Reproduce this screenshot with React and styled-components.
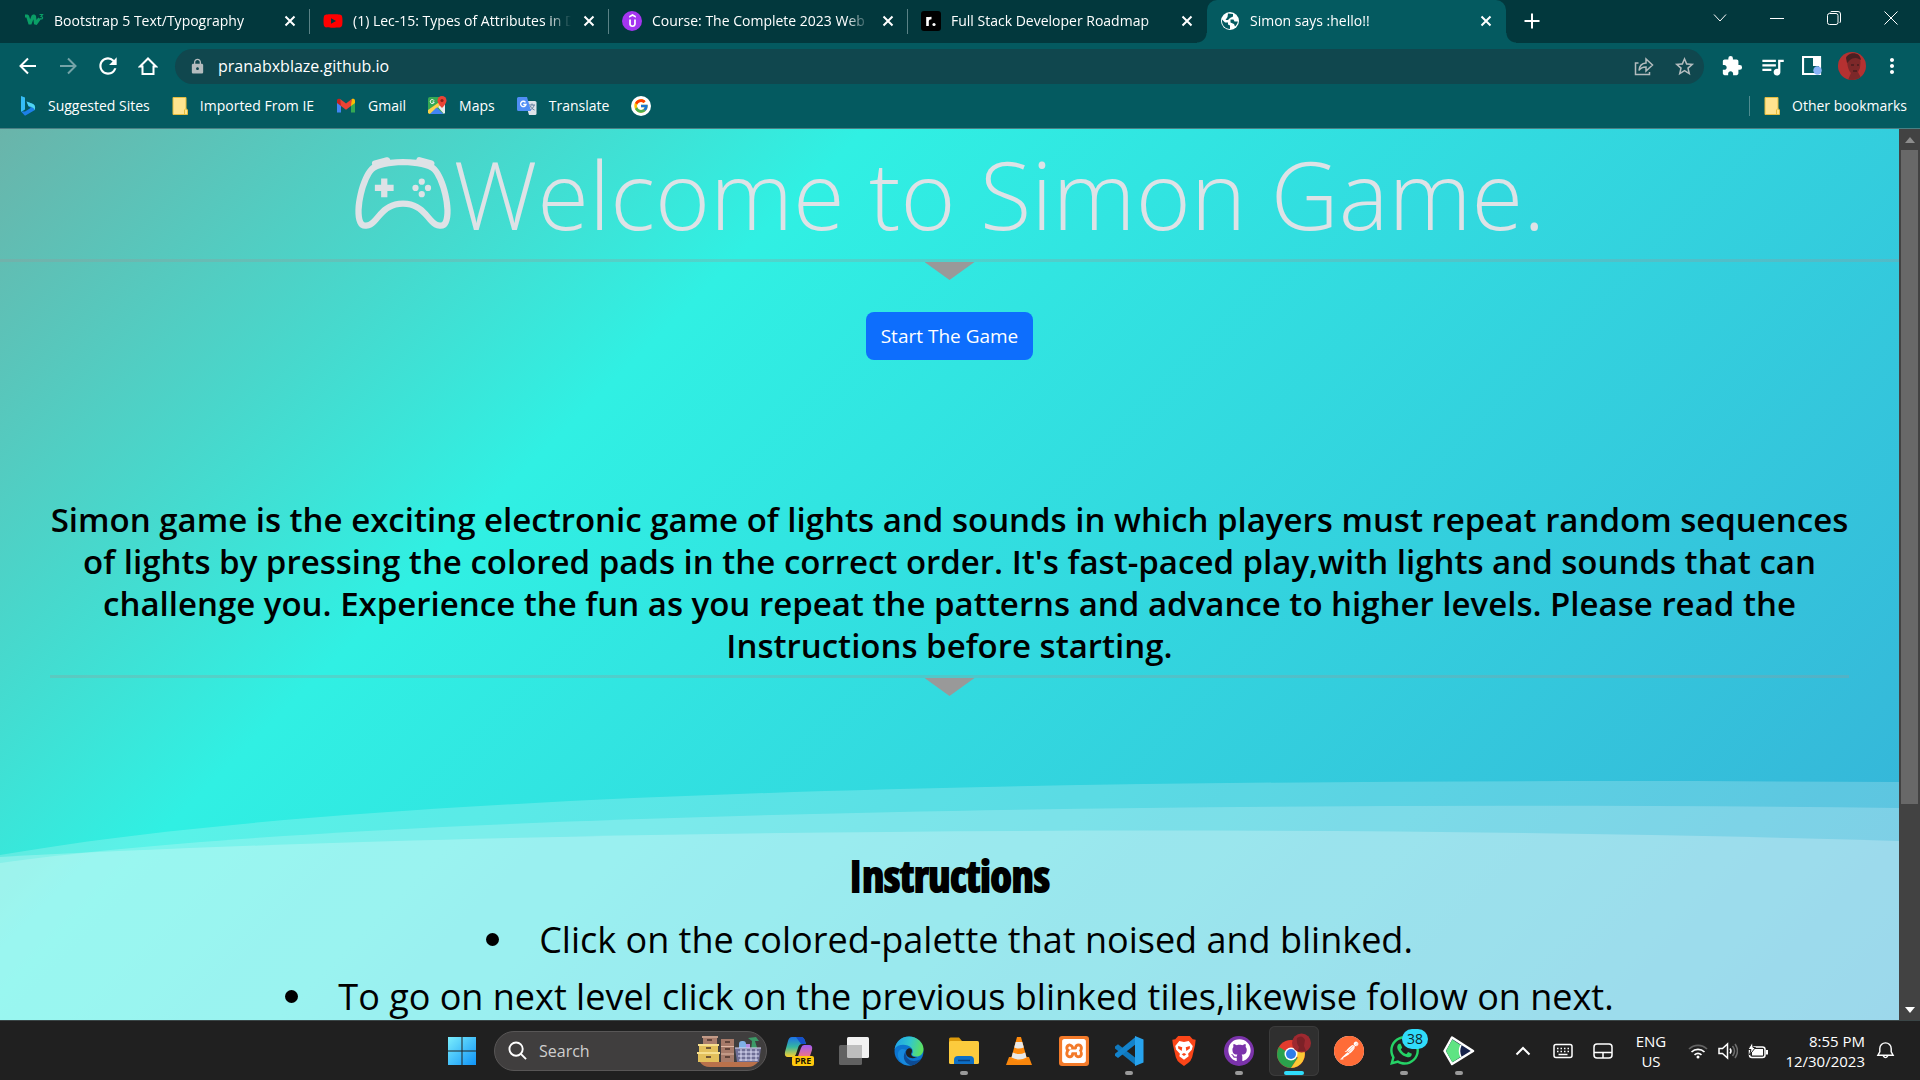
import React from "react";
import styled, { createGlobalStyle, css } from "styled-components";
import { FaYoutube, FaGithub, FaWhatsapp } from "react-icons/fa";
import { FcGoogle } from "react-icons/fc";
import { SiUdemy, SiPostman, SiXampp } from "react-icons/si";
import { MdExtension, MdQueueMusic, MdStarBorder, MdRefresh, MdLock, MdMoreVert } from "react-icons/md";
import { BsController } from "react-icons/bs";

const ui = `"Segoe UI", "Open Sans", "Noto Sans", sans-serif`;

const Global = createGlobalStyle`
  * { box-sizing: border-box; }
  body { margin: 0; font-family: ${ui}; overflow: hidden; }
  button { font: inherit; color: inherit; background: none; border: 0; padding: 0; cursor: pointer; }
  a { color: inherit; text-decoration: none; }
  svg { display: block; flex: none; }
`;

const Desktop = styled.div`
  display: flex;
  flex-direction: column;
  height: 100vh;
  overflow: hidden;
`;

/* ---------- browser frame ---------- */
const TabStrip = styled.header`
  display: flex;
  height: 43px;
  padding-left: 11px;
  flex: none;
  background: #02383d;
  color: #fff;
`;
const Tab = styled.div`
  position: relative;
  display: flex;
  align-items: center;
  width: 299px;
  height: 43px;
  padding: 0 12px 2px 13px;
  gap: 10px;
  border-radius: 10px 10px 0 0;
  background: ${(p) => (p.$active ? "#045a60" : "transparent")};
  ${(p) => p.$divider && css`
    &::after {
      content: "";
      position: absolute;
      right: 0;
      top: 9px;
      width: 1px;
      height: 25px;
      background: #5a8286;
    }
  `}
  ${(p) => p.$active && css`
    &::before, &::after {
      content: "";
      position: absolute;
      bottom: 0;
      width: 10px;
      height: 10px;
    }
    &::before { left: -10px; background: radial-gradient(circle at 0 0, transparent 9px, #045a60 10px); }
    &::after { right: -10px; background: radial-gradient(circle at 100% 0, transparent 9px, #045a60 10px); }
  `}
`;
const TabTitle = styled.span`
  flex: 1;
  min-width: 0;
  overflow: hidden;
  white-space: nowrap;
  font-size: 14px;
  line-height: 20px;
  mask-image: linear-gradient(90deg, #000 calc(100% - 24px), transparent);
`;
const IconButton = styled.button`
  display: flex;
  align-items: center;
  justify-content: center;
  width: ${(p) => p.$w || 40}px;
  height: ${(p) => p.$h || 36}px;
  flex: none;
`;
const Spacer = styled.div`flex: 1;`;

const Toolbar = styled.nav`
  display: flex;
  align-items: center;
  height: 46px;
  padding: 0 8px;
  flex: none;
  background: #045a60;
  color: #fff;
`;
const AddressBar = styled.label`
  display: flex;
  align-items: center;
  flex: 1;
  height: 35px;
  margin: 0 8px 0 7px;
  padding-left: 14px;
  border-radius: 18px;
  background: #10474e;
  color: #b4bcbe;
`;
const Address = styled.input`
  flex: 1;
  min-width: 0;
  margin-left: 12px;
  padding: 0;
  border: 0;
  outline: 0;
  background: none;
  color: #fff;
  font: 16px/24px ${ui};
`;
const Avatar = styled.span`
  width: 28px;
  height: 28px;
  border-radius: 50%;
  overflow: hidden;
`;
const Bookmarks = styled.nav`
  display: flex;
  align-items: center;
  height: 40px;
  padding: 0 13px 6px 20px;
  gap: 22px;
  flex: none;
  background: #045a60;
  border-bottom: 1px solid #4a8084;
  color: #fff;
`;
const Bookmark = styled.a`
  display: flex;
  align-items: center;
  gap: 12px;
  font-size: 14px;
  line-height: 20px;
  white-space: nowrap;
`;
const Divider = styled.span`
  width: 1px;
  height: 20px;
  background: #4f8c90;
  margin-right: -8px;
`;

/* ---------- page ---------- */
const Viewport = styled.div`
  display: flex;
  flex: 1;
  min-height: 0;
`;
const Page = styled.main`
  position: relative;
  flex: 1;
  overflow: hidden;
  background: linear-gradient(135deg, #6ab4aa 0%, #30f0e3 31%, #36b0d8 100%);
  text-align: center;
  color: #000;
`;
const Title = styled.h1`
  display: flex;
  align-items: center;
  justify-content: center;
  margin: 0;
  font-size: 94px;
  line-height: 130px;
  font-weight: 300;
  color: #dee2e6;
  white-space: nowrap;
  svg { width: 100px; height: 100px; }
`;
const Rule = styled.div`
  height: 3px;
  background: rgba(153, 153, 153, 0.3);
`;
const Pointer = styled.div`
  width: 50px;
  height: 18px;
  margin: 0 auto;
  background: #999;
  clip-path: polygon(0 0, 100% 0, 50% 100%);
`;
const StartButton = styled.button`
  height: 48px;
  margin-top: 32px;
  padding: 0 15px;
  border-radius: 8px;
  background: #0d6efd;
  color: #fff;
  font-size: 19px;
`;
const Intro = styled.section`
  margin: 139px 50px 0;
`;
const IntroText = styled.h3`
  margin: 0 -50px;
  padding-bottom: 8px;
  font-size: 33px;
  line-height: 42px;
  font-weight: 600;
  white-space: nowrap;
`;
const Waves = styled.svg`
  position: absolute;
  left: 0;
  bottom: 0;
  width: 100%;
  height: 240px;
`;
const Instructions = styled.section`
  position: relative;
  margin-top: 154px;
`;
const Heading = styled.h2`
  margin: 0;
  font: 900 43px/52px Impact, "Open Sans Condensed", "Roboto Condensed", Roboto, sans-serif;
  -webkit-text-stroke: 2px #000;
`;
const Steps = styled.ul`
  margin: 9px 0 0;
  padding: 0;
  list-style: none;
`;
const Step = styled.li`
  display: flex;
  align-items: center;
  justify-content: center;
  gap: 40px;
  font-size: 36px;
  line-height: 57px;
  font-weight: 400;
  white-space: nowrap;
  &::before {
    content: "";
    width: 13px;
    height: 13px;
    border-radius: 50%;
    background: #000;
  }
`;
const Scrollbar = styled.div`
  display: flex;
  flex-direction: column;
  align-items: center;
  justify-content: space-between;
  width: 21px;
  flex: none;
  background: #424242;
`;
const ScrollArrow = styled.button`
  display: flex;
  align-items: center;
  justify-content: center;
  width: 20px;
  height: 21px;
`;
const Track = styled.div`
  flex: 1;
  display: flex;
  flex-direction: column;
  align-items: center;
  width: 20px;
`;
const Thumb = styled.div`
  width: 17px;
  flex: 0 0 77%;
  background: #686868;
`;

/* ---------- taskbar ---------- */
const Taskbar = styled.footer`
  display: flex;
  align-items: center;
  justify-content: space-between;
  height: 60px;
  padding: 0 15px 0 437px;
  flex: none;
  background: #202020;
  border-top: 1px solid #3a4546;
  color: #fff;
`;
const Apps = styled.div`
  display: flex;
  align-items: center;
  gap: 5px;
`;
const AppButton = styled.button`
  position: relative;
  display: flex;
  align-items: center;
  justify-content: center;
  width: 50px;
  height: 50px;
  border-radius: 6px;
  background: ${(p) => (p.$active ? "#2f2f2f" : "none")};
  box-shadow: ${(p) => (p.$active ? "inset 0 0 0 1px #3b3b3b" : "none")};
  ${(p) => (p.$running || p.$active) && css`
    &::after {
      content: "";
      position: absolute;
      bottom: 1px;
      width: ${p.$active ? 20 : 8}px;
      height: 4px;
      border-radius: 2px;
      background: ${p.$active ? "#30dcfa" : "#9a9a9a"};
    }
  `}
`;
const Search = styled.label`
  display: flex;
  align-items: center;
  width: 273px;
  height: 40px;
  margin: 0 2px;
  padding: 0 5px 0 13px;
  border-radius: 20px;
  border: 1px solid #585656;
  background: #403e3e;
`;
const SearchInput = styled.input`
  flex: 1;
  min-width: 0;
  margin-left: 12px;
  padding: 0;
  border: 0;
  outline: 0;
  background: none;
  font: 16px/24px ${ui};
  &::placeholder { color: #cfcfcf; opacity: 1; }
`;
const Badge = styled.span`
  position: absolute;
  top: 3px;
  right: 1px;
  width: 26px;
  height: 20px;
  border-radius: 10px;
  background: #30dcfa;
  color: #10262b;
  font-size: 14px;
  line-height: 20px;
`;
const Tray = styled.div`
  display: flex;
  align-items: center;
  font-size: 15px;
  line-height: 20px;
`;
const TrayButton = styled.button`
  display: flex;
  align-items: center;
  justify-content: center;
  gap: 10px;
  width: ${(p) => p.$w || 40}px;
  height: 40px;
  text-align: ${(p) => p.$align || "center"};
  ${(p) => p.$align === "right" && "justify-content: flex-end;"}
`;

/* ---------- icons ---------- */
const Line = ({ w = 20, h = w, box = "0 0 20 20", sw = 2, children, ...rest }) => (
  <svg width={w} height={h} viewBox={box} fill="none" stroke="currentColor" strokeWidth={sw} {...rest}>{children}</svg>
);
const CloseIcon = () => <Line w={12} box="0 0 12 12"><path d="M1.500 1.500l9 9m0-9l-9 9" /></Line>;
const W3Mark = () => (
  <svg width="20" height="16" viewBox="0 0 20 16" fill="none" stroke="#0a9e66">
    <path d="M1 3h2.500L6 11l3-8h1.500l1 8 4-5.500" strokeWidth="3" strokeLinejoin="bevel" />
    <path d="M15.500 1.500h3l-1.500 2q2 .2 1.500 1.800-1 1.200-2.800.2" strokeWidth="1.200" />
  </svg>
);
const FolderMark = () => (
  <svg width="16" height="18" viewBox="0 0 16 18">
    <path d="M1 .5h13v11.500l1.500.8v4.700H1z" fill="#ffe48f" stroke="#e5bd3f" />
    <path d="M12.500 17v-4l1.500-1.500" fill="none" stroke="#e5bd3f" />
  </svg>
);
const Bing = () => (
  <svg width="16" height="20" viewBox="0 0 16 20">
    <path d="M1 0l4 1.500v12L1 16z" fill="#35bdf5" />
    <path d="M1 15.500l4 4.200 9.500-5.500c1.500-3 .3-5.500-2-6.500L6.500 5.500l2 5 2.500 1.300L5 15.500z" fill="#1d7fe8" />
    <path d="M6.500 5.500l6 2.200c2.500 1 3.300 4 2 6.500-.3-2-1.500-2.500-3.500-3.400L8.500 10z" fill="#50d6ee" />
  </svg>
);
const Gmail = () => (
  <svg width="20" height="16" viewBox="0 0 20 16">
    <path d="M1 2v12.500h4V7z" fill="#4285f4" /><path d="M19 2v12.500h-4V7z" fill="#34a853" />
    <path d="M15 3.500V8l4-3V2.500C19 .8 17 .2 15.800 1z" fill="#fbbc04" />
    <path d="M1 2.500V5l4 3V3.500L4 1C2.500.2 1 1 1 2.500z" fill="#c5221f" />
    <path d="M4.200 1L10 5.400 15.800 1 15 8l-5 3.800L5 8z" fill="#ea4335" />
  </svg>
);
const Maps = () => (
  <svg width="19" height="19" viewBox="0 0 19 19">
    <rect y="1" width="17" height="17" rx="2" fill="#34a853" />
    <path d="M0 14v3l2 1L17 5V2z" fill="#fbd04a" />
    <path d="M8.500 11.500l7 6.500H2z" fill="#4285f4" /><path d="M10 11l7-6v11.500L16 18z" fill="#e8eaed" />
    <path d="M14 0a4.500 4.500 0 0 1 4.500 4.500C18.500 7.500 14 12 14 12S9.500 7.500 9.500 4.500A4.500 4.500 0 0 1 14 0z" fill="#ea4335" />
    <circle cx="14" cy="4.500" r="1.600" fill="#8e2019" />
    <path d="M6 4.600A2 2 0 1 0 6.200 6H4.500" fill="none" stroke="#fff" />
  </svg>
);
const Translate = () => (
  <svg width="20" height="20" viewBox="0 0 20 20">
    <path d="M8 5h10a1.500 1.500 0 0 1 1.500 1.500v11A1.500 1.500 0 0 1 18 19h-6z" fill="#dfe3ea" />
    <path d="M12 9h6m-3-1.500V9m2 0c0 2-2 4-4 5m.5-4c.5 2 2 3 4 4" stroke="#607d9b" fill="none" />
    <path d="M1.500 1H10l4 14H1.500A1.500 1.500 0 0 1 0 13.500v-11A1.500 1.500 0 0 1 1.500 1z" fill="#4f8df5" />
    <path d="M8.500 6.300A2.700 2.700 0 1 0 9 8.500H6.300" fill="none" stroke="#fff" strokeWidth="1.300" />
  </svg>
);
const GoogleMark = styled.span`
  display: flex;
  padding: 2px;
  border-radius: 50%;
  background: #fff;
`;
const Udemy = styled.span`
  display: flex;
  align-items: center;
  justify-content: center;
  width: 20px;
  height: 20px;
  border-radius: 50%;
  background: #a435f0;
`;
const Roadmap = styled(Udemy)`
  border-radius: 3px;
  background: #000;
`;
const Globe = () => (
  <svg width="20" height="20" viewBox="0 0 20 20">
    <circle cx="10" cy="10" r="9" fill="#fff" />
    <path d="M2 8.500l3 3h3v2l2 1v3.500C5 18 1.500 14 2 8.500zM8 2.500l5 .5v2.500l-3 1.500-2 2H5.500L7.500 6zM10.500 8.500h3l1 2h3.300c-.3 2-1.300 3.700-2.800 5l-1-2.500-3.500-1.500z" fill="#045a60" />
  </svg>
);
const Portrait = () => (
  <svg width="28" height="28" viewBox="0 0 28 28">
    <rect width="28" height="28" fill="#b53131" />
    <path d="M9 7c1-5 11-6 13 0 1 3 0 6 0 9l-2 4 4 8H10l3-7c-3-3-4-9-4-14z" fill="#7d2829" />
    <path d="M8 6c2-6 14-7 15 2l-2-1c-3-2-7-1-9 1l-3 3z" fill="#4c1f21" />
    <path d="M13 13h3m3 0h2m-6 6h4" stroke="#4a1c1e" strokeWidth="1.500" />
  </svg>
);
const WindowsLogo = () => (
  <svg width="30" height="30" viewBox="0 0 30 30">
    <defs><linearGradient id="win" x1="0" y1="0" x2="1" y2="1"><stop stopColor="#7beefc" /><stop offset="1" stopColor="#0f93f7" /></linearGradient></defs>
    <path d="M1 1h13.500v13.500H1zM15.500 1H29v13.500H15.500zM1 15.500h13.500V29H1zM15.500 15.500H29V29H15.500z" fill="url(#win)" />
  </svg>
);
const Boxes = () => (
  <svg width="64" height="32" viewBox="0 0 64 32">
    <path d="M3 27h58q-4 5-10 5H13q-7 0-10-5z" fill="#b9714b" />
    <rect x="6" y="1" width="14" height="8" fill="#a97d6c" /><rect x="5" y="1" width="16" height="2" fill="#c29b88" />
    <rect x="2" y="10" width="19" height="7" fill="#e3c05c" /><rect x="1" y="9" width="21" height="2" fill="#f6df8f" />
    <rect x="1" y="18" width="21" height="9" fill="#e3c05c" /><rect x="0" y="17" width="23" height="2" fill="#f6df8f" />
    <rect x="24" y="4" width="13" height="23" fill="#a67a69" />
    <path d="M24 11.500h13M24 19h13" stroke="#e0b8a4" />
    <path d="M10 5h5M9 13h5M9 22h5M28 7h5M28 14h5M28 22h5" stroke="#4b332b" strokeWidth="1.500" />
    <rect x="42" y="6" width="7" height="10" rx="3" fill="#7fb0e6" /><rect x="49" y="9" width="4" height="6" fill="#b48ae0" />
    <path d="M51 3l8-1 3 4h-4l3 10h-7l1-10z" fill="#3c9a67" />
    <path d="M38 13h26l-2 14H40z" fill="#6f6f96" />
    <path d="M38 13h26M41 17h21M41 21h21M42 25h19M44 14v12M49 14v12M54 14v12M59 14v12" stroke="#dcdcf5" />
  </svg>
);
const Copilot = () => (
  <svg width="30" height="32" viewBox="0 0 30 32">
    <defs>
      <linearGradient id="cpa" x1="0" y1="0" x2="0" y2="1"><stop stopColor="#1d72e8" /><stop offset=".5" stopColor="#35b7a0" /><stop offset="1" stopColor="#ffd02b" /></linearGradient>
      <linearGradient id="cpb" x1="0" y1="0" x2="0" y2="1"><stop stopColor="#a35bf2" /><stop offset="1" stopColor="#ff7a6b" /></linearGradient>
    </defs>
    <path d="M8 2h9q3 0 4 4l1 3h-4q-3 0-4 4l-2 6q-1 3-4 3H4q-4 0-3-5L4 6q1-4 4-4z" fill="url(#cpa)" />
    <path d="M12 2h5q3 0 4 4l1 3h-5z" fill="#1550c9" />
    <path d="M20 10h5q4 0 3 5l-3 9H13l4-11q1-3 3-3z" fill="url(#cpb)" />
    <rect x="8" y="21" width="22" height="10" rx="2" fill="#ffc90e" />
    <text x="19" y="29.300" textAnchor="middle" fontSize="9" fontWeight="700" fill="#1b1500" fontFamily="Open Sans, sans-serif">PRE</text>
  </svg>
);
const TaskView = () => (
  <svg width="30" height="30" viewBox="0 0 30 30">
    <rect x="8" y="1" width="22" height="21" rx="1.500" fill="#f1f1f1" />
    <rect x="0" y="9" width="23" height="20" rx="1.500" fill="#686868" opacity=".9" />
    <path d="M8 9h15v13H9.500A1.500 1.500 0 0 1 8 20.500z" fill="#bdbdbd" />
  </svg>
);
const Edge = () => (
  <svg width="30" height="30" viewBox="0 0 30 30">
    <defs><linearGradient id="eg" x1="0" y1=".3" x2="1" y2=".5"><stop stopColor="#1fa2e8" /><stop offset=".5" stopColor="#31c6cf" /><stop offset="1" stopColor="#5fe25b" /></linearGradient></defs>
    <circle cx="15" cy="15" r="14.500" fill="#0c74cf" />
    <path d="M.6 13C2 5 8 .5 15 .5c8 0 14.500 6 14.500 12.500 0 5-3.500 7.500-7 7.500-3 0-5-1-4.500-2.500 1.500-2 1-4-.5-6C13 7 3 8 .6 13z" fill="url(#eg)" />
    <path d="M12 14c-3 6 1 13 8 14.500-6 2.500-14 0-16-8C3 15 7 11 12 14z" fill="#1789dc" />
    <path d="M12.500 14c-3 6 2 11 7.500 11 3 0 5.500-1 7.500-2.500C25.500 26 22 29 17 29.400 9 27 8 19 12.500 14z" fill="#0d4b94" />
    <path d="M12.500 14c2-3 6-2 5.500 1 0 1-.5 2-1 3 0 2.500 3 3.500 6 3-4 2.500-11 1-11-4 0-1 0-2 .5-3z" fill="#202020" />
  </svg>
);
const Explorer = () => (
  <svg width="30" height="30" viewBox="0 0 30 30">
    <path d="M0 3a1.500 1.500 0 0 1 1.500-1.500H10L13 5v7H0z" fill="#dc9a0b" />
    <rect y="5" width="30" height="23" rx="1.500" fill="#fccb3d" />
    <path d="M5 28v-4q0-4 4-4h12q4 0 4 4v4z" fill="#0d6fc6" /><path d="M9 24.500h12" stroke="#083f7c" strokeWidth="1.500" />
  </svg>
);
const Vlc = () => (
  <svg width="28" height="30" viewBox="0 0 28 30">
    <path d="M4 21h20l3 8H1z" fill="#f8860c" /><path d="M12 1h4l6 22q-8 5-16 0z" fill="#ff8a0d" />
    <path d="M10.700 6h6.600l1.500 5.500q-5 2-9.600 0zM7.800 16.500q6 3 12.400 0l1.300 5q-7 4-15 0z" fill="#e9e9e9" />
  </svg>
);
const IconTile = styled.span`
  display: flex;
  align-items: center;
  justify-content: center;
  width: 30px;
  height: 30px;
  border-radius: ${(p) => p.$round || "3px"};
  background: ${(p) => p.$bg};
  color: #fff;
`;
const Code = () => (
  <svg width="30" height="30" viewBox="0 0 30 30">
    <path d="M1 10.500l3-2.300 18 14V29.500L1 12.500z" fill="#0f78bd" />
    <path d="M22 .5v7.500L4 22l-3-2.300v-2z" fill="#1383cc" /><path d="M21 0l8.500 3.500v23L21 30z" fill="#27a3ee" />
  </svg>
);
const Brave = () => (
  <svg width="28" height="30" viewBox="0 0 24 24" preserveAspectRatio="none">
    <path d="M7 0h10l2.500 2.500L22 3l-.5 4-2.500 10q-1 3-3.500 4.500L12 24l-3.500-2.500Q6 20 5 17L2.500 7 2 3l2.500-.5z" fill="#fb4518" />
    <path d="M8 4l4 .8L16 4l3.500 4-.8 3-3.200 3.200.5 2L12 19l-4-2.800.5-2L5.300 11l-.8-3z" fill="#fff" />
    <path d="M7 8l3.500 1-.5 3-3-2zM17 8l-3.500 1 .5 3 3-2zM10 14.500l2-1 2 1-2 1.500z" fill="#fb4518" />
  </svg>
);
const Chrome = () => (
  <svg width="34" height="36" viewBox="0 0 34 36">
    <circle cx="14" cy="21" r="14" fill="#e33b2e" />
    <path d="M14 21L1.900 14A14 14 0 0 0 14 35l6.500-10z" fill="#2ba24c" />
    <path d="M14 21l7 3.500L14 35a14 14 0 0 0 12.500-20H14z" fill="#fcc934" />
    <circle cx="14" cy="21" r="6.500" fill="#fff" /><circle cx="14" cy="21" r="5" fill="#2f7de9" />
    <circle cx="24.500" cy="10" r="9.500" fill="#9e2930" />
    <path d="M20 5q5-4 8 2l-1 6 2 5h-8l1-4q-3-4-2-9z" fill="#7c2127" />
  </svg>
);
const DevTool = () => (
  <svg width="32" height="30" viewBox="0 0 32 30">
    <path d="M9 1.500L30 15 9 28 1.500 15z" fill="#16234b" stroke="#fff" strokeWidth="2.500" strokeLinejoin="round" />
    <path d="M9.300 3.500l9 6q-4 5 0 11l-9 5.700L3 15z" fill="#5fe483" />
    <path d="M18 9q-3 6 0 12" fill="none" stroke="#fff" strokeWidth="1.500" />
  </svg>
);
const PostmanDisc = styled.span`
  display: flex;
  border-radius: 50%;
  background: #fff;
`;
const Battery = () => (
  <svg width="21" height="18" viewBox="0 0 21 18">
    <rect x="1.500" y="5" width="15.500" height="10.500" rx="2.500" fill="none" stroke="#fff" strokeWidth="1.500" />
    <path d="M4 7h11v6.500H4zM18 8h2v4.500h-2z" fill="#fff" />
    <path d="M4.500 0L0 7.500h3L1.500 13l6-7.500H5z" fill="#fff" stroke="#202020" />
  </svg>
);

const tabs = [
  { title: "Bootstrap 5 Text/Typography", icon: <W3Mark /> },
  { title: "(1) Lec-15: Types of Attributes in D", icon: <FaYoutube size={20} color="#f00" /> },
  { title: "Course: The Complete 2023 Web", icon: <Udemy><SiUdemy size={13} color="#fff" /></Udemy> },
  { title: "Full Stack Developer Roadmap", icon: <Roadmap><svg width="12" height="12" viewBox="0 0 12 12"><path d="M2.500 11V2m0 4q0-3 4-3" stroke="#fff" strokeWidth="2.600" fill="none" /><circle cx="9" cy="9.500" r="1.600" fill="#fff" /></svg></Roadmap> },
  { title: "Simon says :hello!!", icon: <Globe />, active: true },
];

const marks = [
  ["Suggested Sites", <Bing />], ["Imported From IE", <FolderMark />], ["Gmail", <Gmail />],
  ["Maps", <Maps />], ["Translate", <Translate />],
];

const apps = [
  { name: "Copilot", icon: <Copilot /> },
  { name: "Task view", icon: <TaskView /> },
  { name: "Edge", icon: <Edge /> },
  { name: "File Explorer", icon: <Explorer />, running: true },
  { name: "VLC", icon: <Vlc /> },
  { name: "XAMPP", icon: <IconTile $bg="#f37a29"><SiXampp size={24} /></IconTile> },
  { name: "Code", icon: <Code />, running: true },
  { name: "Brave", icon: <Brave /> },
  { name: "GitHub", icon: <IconTile $bg="#7b33ab" $round="50%"><FaGithub size={23} /></IconTile>, running: true },
  { name: "Chrome", icon: <Chrome />, active: true },
  { name: "Postman", icon: <PostmanDisc><SiPostman size={30} color="#ff6c37" /></PostmanDisc> },
  { name: "WhatsApp", icon: <FaWhatsapp size={33} color="#25d366" />, running: true, badge: "38" },
  { name: "Developer tool", icon: <DevTool />, running: true },
];

export default function App() {
  return (
    <Desktop>
      <Global />
      <TabStrip>
        {tabs.map((t, i) => (
          <Tab key={t.title} $active={t.active} $divider={i < 3}>
            {t.icon}
            <TabTitle>{t.title}</TabTitle>
            <IconButton $w={16} $h={16} aria-label="Close tab"><CloseIcon /></IconButton>
          </Tab>
        ))}
        <IconButton $w={52} $h={42} aria-label="New tab"><Line w={16} box="0 0 16 16"><path d="M8 .5v15M.5 8h15" /></Line></IconButton>
        <Spacer />
        <IconButton $w={57} aria-label="Search tabs"><Line w={14} box="0 0 14 14" sw={1}><path d="M1 3.500l6 6.500 6-6.500" /></Line></IconButton>
        <IconButton $w={57} aria-label="Minimize"><Line w={14} box="0 0 14 14" sw={1}><path d="M0 7.500h14" /></Line></IconButton>
        <IconButton $w={57} aria-label="Restore"><Line w={14} box="0 0 14 14" sw={1}><rect x=".5" y="2.500" width="10.500" height="11" rx="2" /><path d="M3 1.500q.5-1 2-1h6q2.500 0 2.500 2.500v7q0 1.500-1 2" /></Line></IconButton>
        <IconButton $w={58} aria-label="Close"><Line w={14} box="0 0 14 14" sw={1}><path d="M.5.5l13 13m0-13l-13 13" /></Line></IconButton>
      </TabStrip>
      <Toolbar>
        <IconButton aria-label="Back"><Line w={20}><path d="M18 10H3m7-7.500L2.500 10l7.500 7.500" /></Line></IconButton>
        <IconButton aria-label="Forward"><Line w={20} opacity=".45"><path d="M2 10h15m-7-7.500l7.500 7.500-7.500 7.500" /></Line></IconButton>
        <IconButton aria-label="Reload"><MdRefresh size={26} /></IconButton>
        <IconButton aria-label="Home"><Line w={20}><path d="M2 10.500L10 2.500l8 8h-2.500V18h-11v-7.500z" /></Line></IconButton>
        <AddressBar>
          <MdLock size={17} />
          <Address aria-label="Address" defaultValue="pranabxblaze.github.io" />
          <IconButton aria-label="Share"><Line w={20} sw={1.5}><path d="M4.500 7H1.500v11.500h14V16M5 14.500q.5-7 7-7.500V3l6.500 6-6.500 6v-4q-5 0-7 3.500z" /></Line></IconButton>
          <IconButton aria-label="Bookmark"><MdStarBorder size={23} /></IconButton>
        </AddressBar>
        <IconButton aria-label="Extensions"><MdExtension size={22} /></IconButton>
        <IconButton aria-label="Media"><MdQueueMusic size={27} /></IconButton>
        <IconButton aria-label="Side panel">
          <svg width="20" height="20" viewBox="0 0 20 20"><path d="M1 1h17v17H1z" fill="none" stroke="#fff" strokeWidth="2.200" /><path d="M11 1h7v9h-7z" fill="#fff" /><circle cx="15.500" cy="14.500" r="4.200" fill="#8ab4f8" /></svg>
        </IconButton>
        <IconButton aria-label="Profile"><Avatar><Portrait /></Avatar></IconButton>
        <IconButton aria-label="Menu"><MdMoreVert size={24} /></IconButton>
      </Toolbar>
      <Bookmarks>
        {marks.map(([label, icon]) => <Bookmark href="#" key={label}>{icon}{label}</Bookmark>)}
        <Bookmark href="#" aria-label="Google"><GoogleMark><FcGoogle size={16} /></GoogleMark></Bookmark>
        <Spacer />
        <Divider />
        <Bookmark href="#"><FolderMark />Other bookmarks</Bookmark>
      </Bookmarks>

      <Viewport>
        <Page>
          <Waves viewBox="0 0 1900 240" preserveAspectRatio="none">
            <path d="M0 75C400 5 1200 -2 1900 2V240H0z" fill="rgba(255,255,255,.2)" />
            <path d="M0 83C350 33 1200 20 1900 28V240H0z" fill="rgba(255,255,255,.2)" />
            <path d="M0 77C500 50 1250 42 1900 61V240H0z" fill="rgba(255,255,255,.24)" />
          </Waves>
          <Title><BsController />Welcome to Simon Game.</Title>
          <Rule />
          <Pointer />
          <StartButton>Start The Game</StartButton>
          <Intro>
            <IntroText>
              Simon game is the exciting electronic game of lights and sounds in which players must repeat random sequences<br />
              of lights by pressing the colored pads in the correct order. It's fast-paced play,with lights and sounds that can<br />
              challenge you. Experience the fun as you repeat the patterns and advance to higher levels. Please read the<br />
              Instructions before starting.
            </IntroText>
            <Rule />
            <Pointer />
          </Intro>
          <Instructions>
            <Heading>Instructions</Heading>
            <Steps>
              <Step>Click on the colored-palette that noised and blinked.</Step>
              <Step>To go on next level click on the previous blinked tiles,likewise follow on next.</Step>
            </Steps>
          </Instructions>
        </Page>
        <Scrollbar>
          <ScrollArrow aria-label="Scroll up"><svg width="10" height="6"><path d="M0 6l5-6 5 6z" fill="#8c8c8c" /></svg></ScrollArrow>
          <Track><Thumb /></Track>
          <ScrollArrow aria-label="Scroll down"><svg width="10" height="6"><path d="M0 0l5 6 5-6z" fill="#fff" /></svg></ScrollArrow>
        </Scrollbar>
      </Viewport>

      <Taskbar>
        <Apps>
          <AppButton aria-label="Start"><WindowsLogo /></AppButton>
          <Search>
            <Line w={19}><circle cx="8.500" cy="8.500" r="7" /><path d="M13.500 13.500l5.500 5.500" /></Line>
            <SearchInput aria-label="Search" placeholder="Search" />
            <Boxes />
          </Search>
          {apps.map((a) => (
            <AppButton key={a.name} aria-label={a.name} $running={a.running} $active={a.active}>
              {a.icon}
              {a.badge && <Badge>{a.badge}</Badge>}
            </AppButton>
          ))}
        </Apps>
        <Tray>
          <TrayButton aria-label="Hidden icons"><Line w={16} box="0 0 16 16"><path d="M1.500 11.500L8 5l6.500 6.500" /></Line></TrayButton>
          <TrayButton aria-label="Keyboard"><Line w={20} sw={1.5}><rect x="1" y="3.500" width="18" height="13" rx="2" /><path d="M4 7.500h12M4 10.500h12" strokeDasharray="1.500 2" /><path d="M5.500 13.500h9" /></Line></TrayButton>
          <TrayButton aria-label="Touchpad"><Line w={20} sw={1.5}><rect x="1" y="3" width="18" height="14" rx="3" /><path d="M1 11.500h18M10 11.500V17" /></Line></TrayButton>
          <TrayButton $w={56}>ENG<br />US</TrayButton>
          <TrayButton $w={98} aria-label="Network, sound and battery">
            <Line w={20} sw={1.700}><path d="M1 8a13 13 0 0 1 18 0" opacity=".3" /><path d="M3.500 11a9.500 9.500 0 0 1 13 0M6.500 13.800a5.500 5.500 0 0 1 7 0" /><circle cx="10" cy="16" r="1.500" fill="currentColor" stroke="none" /></Line>
            <Line w={20} sw={1.500}><path d="M1 7.500h3.500L9.500 3v14l-5-4.500H1z" /><path d="M12 7.500q2 2.500 0 5" /><path d="M14.500 5q4 5 0 10M17 3q5 7 0 14" opacity=".35" /></Line>
            <Battery />
          </TrayButton>
          <TrayButton $w={88} $align="right">8:55 PM<br />12/30/2023</TrayButton>
          <TrayButton aria-label="Notifications"><Line w={19} sw={1.500}><path d="M2 15h16l-2-3.500V8a6 6 0 0 0-12 0v3.500zM7.500 15.500q2.500 4 5 0" /></Line></TrayButton>
        </Tray>
      </Taskbar>
    </Desktop>
  );
}
